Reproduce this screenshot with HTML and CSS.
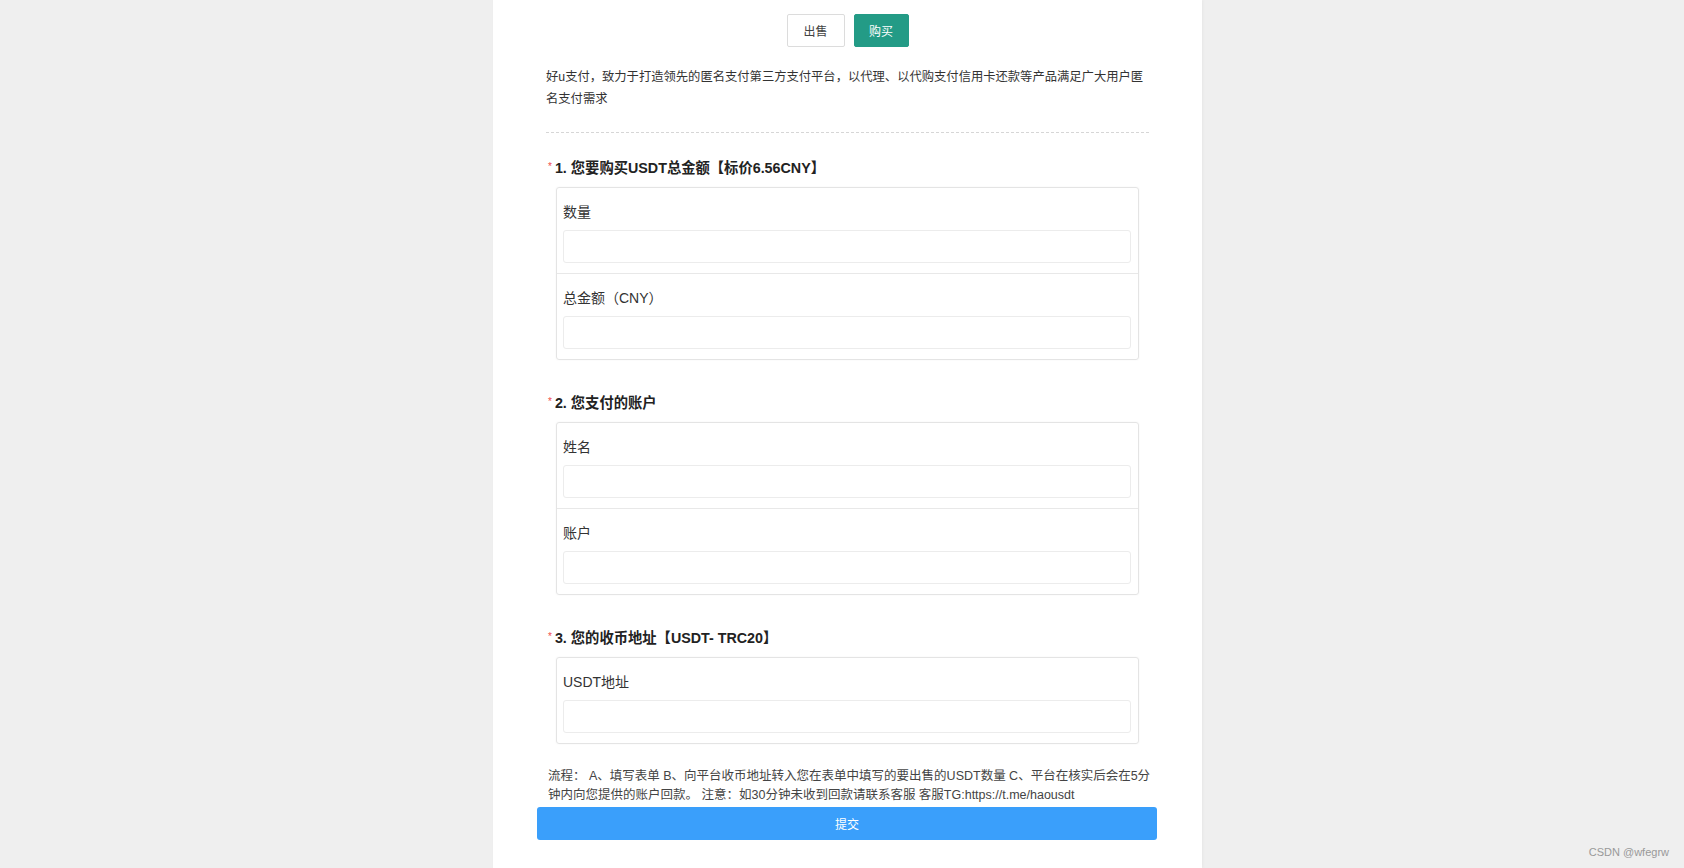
FILE: index.html
```html
<!DOCTYPE html>
<html lang="zh-CN">
<head>
    <meta charset="UTF-8">
    <meta name="viewport" content="width=device-width, initial-scale=1.0">
    <title>好u支付 - 购买USDT</title>
    <link rel="stylesheet" href="styles.css">
</head>
<body>
    <div class="page">
        <div class="tabs">
            <button class="tab">出售</button>
            <button class="tab active">购买</button>
        </div>

        <div class="content">
            <p class="intro">好u支付，致力于打造领先的匿名支付第三方支付平台，以代理、以代购支付信用卡还款等产品满足广大用户匿名支付需求</p>

            <div class="divider"></div>

            <form class="order-form">
                <div class="question">
                    <h3 class="q-title"><span class="req">*</span>1. 您要购买USDT总金额【标价6.56CNY】</h3>
                    <div class="q-card">
                        <div class="field">
                            <label>数量</label>
                            <input type="text">
                        </div>
                        <div class="field">
                            <label>总金额（CNY）</label>
                            <input type="text">
                        </div>
                    </div>
                </div>

                <div class="question">
                    <h3 class="q-title"><span class="req">*</span>2. 您支付的账户</h3>
                    <div class="q-card">
                        <div class="field">
                            <label>姓名</label>
                            <input type="text">
                        </div>
                        <div class="field">
                            <label>账户</label>
                            <input type="text">
                        </div>
                    </div>
                </div>

                <div class="question">
                    <h3 class="q-title"><span class="req">*</span>3. 您的收币地址【USDT- TRC20】</h3>
                    <div class="q-card">
                        <div class="field">
                            <label>USDT地址</label>
                            <input type="text">
                        </div>
                    </div>
                </div>

                <p class="notice">流程： A、填写表单 B、向平台收币地址转入您在表单中填写的要出售的USDT数量 C、平台在核实后会在5分钟内向您提供的账户回款。 注意：如30分钟未收到回款请联系客服 客服TG:https://t.me/haousdt</p>

                <button type="button" class="submit">提交</button>
            </form>
        </div>
    </div>

    <div class="watermark">CSDN @wfegrw</div>
</body>
</html>
```

FILE: styles.css
```css
* {
    margin: 0;
    padding: 0;
    box-sizing: border-box;
    font-family: "Liberation Sans", "Noto Sans CJK SC", sans-serif;
}

html, body {
    height: 100%;
    overflow: hidden;
}

body {
    background: #efefef;
}

.page {
    width: 709px;
    height: 100%;
    margin-left: calc(50% - 349px);
    background: #fff;
    padding-top: 14px;
    box-shadow: 1px 0 3px rgba(0, 0, 0, 0.04);
}

.tabs {
    display: flex;
    justify-content: center;
    gap: 9px;
}

.tab {
    width: 58px;
    height: 33px;
    border: 1px solid #dcdcdc;
    border-radius: 2px;
    background: #fff;
    color: #444;
    font-size: 12px;
    cursor: pointer;
}

.tab.active {
    width: 55px;
    background: #239b86;
    border-color: #239b86;
    color: #fff;
}

.content {
    padding: 0 53px;
}

.intro {
    margin-top: 19px;
    font-size: 12.3px;
    line-height: 22px;
    color: #333;
}

.divider {
    margin-top: 22px;
    border-top: 1px dashed #d6d6d6;
}

.question {
    margin-top: 25px;
}

.question + .question {
    margin-top: 33px;
}

.q-title {
    height: 20px;
    margin-left: 2px;
    font-size: 14.3px;
    line-height: 20px;
    font-weight: bold;
    color: #222;
}

.req {
    position: relative;
    top: -3px;
    color: #f04a4a;
    font-size: 10px;
    font-weight: normal;
    margin-right: 3px;
}

.q-card {
    margin: 9px 10px 0;
    border: 1px solid #e4e4e4;
    border-radius: 3px;
    box-shadow: 0 0 2px rgba(0, 0, 0, 0.05);
}

.field {
    padding: 14px 7px 10px 6px;
    border-top: 1px solid #e8e8e8;
}

.field:first-child {
    border-top: none;
}

.field label {
    display: block;
    height: 20px;
    font-size: 14px;
    line-height: 20px;
    color: #333;
    margin-bottom: 8px;
}

.field input {
    display: block;
    width: 100%;
    height: 33px;
    border: 1px solid #ececec;
    border-radius: 3px;
    outline: none;
    padding: 0 8px;
    font-size: 13px;
}

.notice {
    margin: 23px -9px 0 2px;
    font-size: 12.5px;
    line-height: 19px;
    color: #444;
}

.submit {
    display: block;
    width: 620px;
    height: 33px;
    margin: 2px 0 0 -9px;
    border: none;
    border-radius: 3px;
    background: #3a9ffb;
    color: #fff;
    font-size: 12px;
    cursor: pointer;
}

.watermark {
    position: absolute;
    right: 15px;
    bottom: 10px;
    font-size: 11px;
    color: #999;
}
```
